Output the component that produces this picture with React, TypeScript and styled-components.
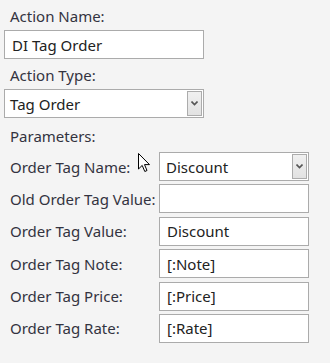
import React from "react";
import styled, { createGlobalStyle } from "styled-components";

const Global = createGlobalStyle`
  html, body { margin: 0; padding: 0; background: #f4f4f4; }
  body { font-family: "Noto Sans", "Open Sans", sans-serif; font-size: 15px; color: #333340; }
  * { box-sizing: border-box; }
`;

const Page = styled.div`
  width: 330px;
  height: 363px;
  padding: 0 0 0 4px;
  position: relative;
  overflow: hidden;
`;

const Caption = styled.div<{ $h: number }>`
  height: ${(p) => p.$h}px;
  display: flex;
  align-items: center;
  padding-left: 6px;
  padding-top: 2px;
  white-space: nowrap;
`;

const TextBox = styled.div<{ $w: number; $pad?: number }>`
  width: ${(p) => p.$w}px;
  height: 29px;
  border: 1px solid #ababab;
  background: #fff;
  display: flex;
  align-items: center;
  padding-left: ${(p) => p.$pad ?? 7}px;
  color: #222;
  white-space: nowrap;
`;

const Combo = styled(TextBox)`
  justify-content: space-between;
  padding-right: 1px;
`;

const DropButton = styled.div`
  width: 15px;
  height: 25px;
  border: 1px solid #acacac;
  background: linear-gradient(#f0f0f0, #e2e2e2);
  display: flex;
  align-items: center;
  justify-content: center;
`;

const Grid = styled.div`
  display: grid;
  grid-template-columns: 155px 150px;
  grid-auto-rows: 29px;
  row-gap: 3.4px;
`;

const RowLabel = styled.div`
  display: flex;
  align-items: center;
  padding-left: 6px;
  white-space: nowrap;
`;

const Cursor = styled.svg`
  position: absolute;
  left: 138px;
  top: 153px;
`;

const Chevron = () => (
  <svg width="7" height="5" viewBox="0 0 7 5">
    <path d="M0.5 0.5 L3.5 3.5 L6.5 0.5" fill="none" stroke="#555" strokeWidth="1.6" />
  </svg>
);

const DropDown: React.FC<{ w: number; pad: number; value: string }> = ({ w, pad, value }) => (
  <Combo $w={w} $pad={pad}>
    <span>{value}</span>
    <DropButton>
      <Chevron />
    </DropButton>
  </Combo>
);

const params: [string, string, boolean][] = [
  ["Order Tag Name:", "Discount", true],
  ["Old Order Tag Value:", "", false],
  ["Order Tag Value:", "Discount", false],
  ["Order Tag Note:", "[:Note]", false],
  ["Order Tag Price:", "[:Price]", false],
  ["Order Tag Rate:", "[:Rate]", false],
];

export default function App() {
  return (
    <>
      <Global />
      <Page>
        <Caption $h={30}>Action Name:</Caption>
        <TextBox $w={200}>DI Tag Order</TextBox>
        <Caption $h={30}>Action Type:</Caption>
        <DropDown w={200} pad={5} value="Tag Order" />
        <Caption $h={34}>Parameters:</Caption>
        <Grid>
          {params.map(([label, value, combo]) => (
            <React.Fragment key={label}>
              <RowLabel>{label}</RowLabel>
              {combo ? (
                <DropDown w={150} pad={6} value={value} />
              ) : (
                <TextBox $w={150}>{value}</TextBox>
              )}
            </React.Fragment>
          ))}
        </Grid>
        <Cursor width="13" height="20" viewBox="0 0 13 20">
          <path d="M0.5 0.5 L0.5 16 L4.2 12.4 L6.8 18.5 L9 17.5 L6.5 11.6 L11.5 11.6 Z" fill="#fff" stroke="#000" strokeWidth="1" strokeLinejoin="round" />
        </Cursor>
      </Page>
    </>
  );
}
